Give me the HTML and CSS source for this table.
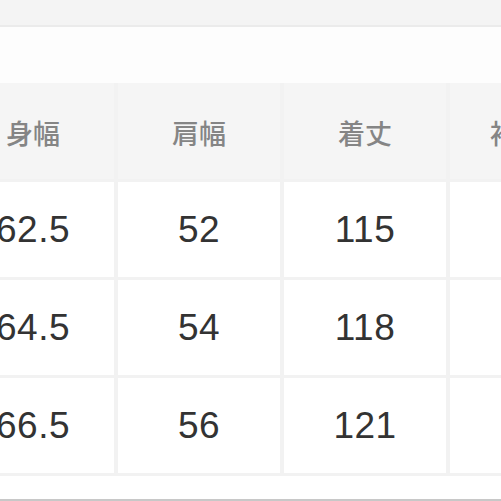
FILE: index.html
```html
<!DOCTYPE html>
<html lang="ja">
<head>
<meta charset="utf-8">
<link rel="stylesheet" href="styles.css">
</head>
<body>
<div class="page">
  <div class="topbar"></div>
  <div class="band"></div>
  <div class="table">
    <div class="cell head">身幅</div>
    <div class="cell head">肩幅</div>
    <div class="cell head">着丈</div>
    <div class="cell head last">袖丈</div>

    <div class="cell">62.5</div>
    <div class="cell">52</div>
    <div class="cell">115</div>
    <div class="cell"></div>

    <div class="cell">64.5</div>
    <div class="cell">54</div>
    <div class="cell">118</div>
    <div class="cell"></div>

    <div class="cell">66.5</div>
    <div class="cell">56</div>
    <div class="cell">121</div>
    <div class="cell"></div>
  </div>
  <div class="bottom"></div>
  <div class="rule"></div>
</div>
</body>
</html>
```

FILE: styles.css
```css
html, body {
  margin: 0;
  padding: 0;
  width: 501px;
  height: 501px;
  overflow: hidden;
  background: #ffffff;
}

.page {
  display: flex;
  flex-direction: column;
  width: 501px;
  height: 501px;
  overflow: hidden;
}

.topbar {
  height: 25px;
  background: #f4f4f4;
  border-bottom: 2px solid #ebebeb;
  flex: none;
}

.band {
  height: 56px;
  background: #fdfdfd;
  flex: none;
}

.table {
  flex: none;
  display: grid;
  grid-template-columns: repeat(4, 162px);
  grid-template-rows: 96px 95px 95px 95px;
  gap: 3px 4px;
  margin-left: -48px;
  width: 660px;
  background: #f2f2f2;
  padding-bottom: 3px;
}

.cell {
  background: #ffffff;
  display: flex;
  align-items: center;
  justify-content: center;
  font-family: "Liberation Sans", Arial, sans-serif;
  font-size: 37px;
  letter-spacing: 0.5px;
  color: #333333;
}

.cell.head {
  background: #f5f5f5;
  font-family: "Noto Sans CJK JP", "Noto Sans", sans-serif;
  font-size: 27px;
  font-weight: 500;
  letter-spacing: 0;
  color: #858585;
  padding-top: 2px;
}

.cell.head.last {
  padding-right: 28px;
}

.bottom {
  flex: 1;
  background: #ffffff;
}

.rule {
  height: 2px;
  background: #c8c8c8;
  flex: none;
}
```
